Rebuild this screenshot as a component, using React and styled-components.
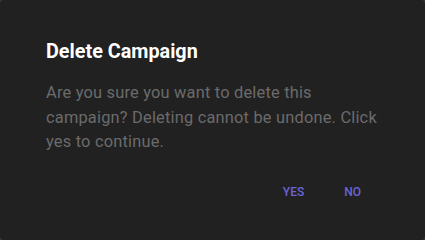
import React from "react";
import styled, { createGlobalStyle } from "styled-components";

const GlobalStyle = createGlobalStyle`
  html, body {
    margin: 0;
    padding: 0;
    background: #3a3a3a;
  }
  body {
    font-family: Roboto, "Liberation Sans", sans-serif;
  }
`;

const Dialog = styled.div`
  width: 425px;
  height: 240px;
  box-sizing: border-box;
  background: #212121;
  border-radius: 4px;
  padding: 36px 48px 0 46px;
  display: flex;
  flex-direction: column;
`;

const Title = styled.h2`
  margin: 0;
  color: #ffffff;
  font-size: 19.8px;
  font-weight: 700;
  line-height: 32px;
`;

const Message = styled.p`
  margin: 13px 0 0;
  color: #6b6b6b;
  font-size: 16.4px;
  line-height: 24.5px;
  letter-spacing: 0.2px;
`;

const Actions = styled.div`
  display: flex;
  justify-content: flex-end;
  gap: 8px;
  margin-top: 25px;
`;

const TextButton = styled.button`
  border: none;
  background: transparent;
  padding: 0 16px;
  font-family: inherit;
  font-size: 12px;
  font-weight: 500;
  line-height: 24px;
  text-transform: uppercase;
  color: #6b63d8;
  cursor: pointer;
`;

export default function App() {
  return (
    <>
      <GlobalStyle />
      <Dialog>
        <Title>Delete Campaign</Title>
        <Message>
          Are you sure you want to delete this campaign? Deleting cannot be
          undone. Click yes to continue.
        </Message>
        <Actions>
          <TextButton>Yes</TextButton>
          <TextButton>No</TextButton>
        </Actions>
      </Dialog>
    </>
  );
}
